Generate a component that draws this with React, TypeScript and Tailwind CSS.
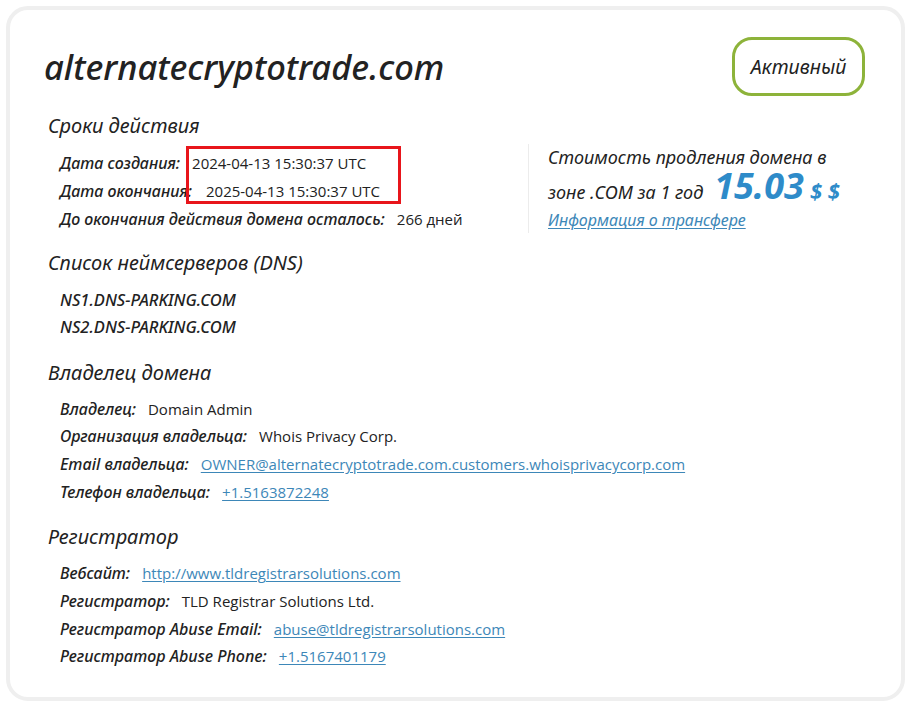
const label = "italic font-medium text-[16px] text-[#222]";
const value = "font-['Open_Sans',sans-serif] text-[15px] text-[#222]";
const link = "font-['Open_Sans',sans-serif] text-[15px] text-[#3d87b8] underline underline-offset-2";
const sans = { fontFamily: "'Noto Sans', sans-serif" };

interface Row {
  label: string;
  value: string;
  link?: boolean;
}

const owner: Row[] = [
  { label: "Владелец:", value: "Domain Admin" },
  { label: "Организация владельца:", value: "Whois Privacy Corp." },
  {
    label: "Email владельца:",
    value: "OWNER@alternatecryptotrade.com.customers.whoisprivacycorp.com",
    link: true,
  },
  { label: "Телефон владельца:", value: "+1.5163872248", link: true },
];

const registrar: Row[] = [
  { label: "Вебсайт:", value: "http://www.tldregistrarsolutions.com", link: true },
  { label: "Регистратор:", value: "TLD Registrar Solutions Ltd." },
  { label: "Регистратор Abuse Email:", value: "abuse@tldregistrarsolutions.com", link: true },
  { label: "Регистратор Abuse Phone:", value: "+1.5167401179", link: true },
];

function Field({ row }: { row: Row }) {
  return (
    <div className="flex h-[27.67px] items-center gap-[12px]">
      <span className={label}>{row.label}</span>
      {row.link ? <a className={link}>{row.value}</a> : <span className={value}>{row.value}</span>}
    </div>
  );
}

function Heading({ children }: { children: React.ReactNode }) {
  return <h2 className="text-[20px] italic leading-[28px] text-[#222]">{children}</h2>;
}

export default function App() {
  return (
    <div className="min-h-[707px] bg-white p-[6px]" style={sans}>
      <div className="rounded-[22px] border-4 border-[#efefef] pb-[27px] pl-[34px] pr-[36px] pt-[27px]">
        <div className="flex items-start justify-between">
          <h1 className="mt-[10px] text-[34.5px] italic font-medium leading-[40px] text-[#222]">
            alternatecryptotrade.com
          </h1>
          <div className="flex h-[59px] w-[133px] items-center justify-center rounded-[20px] border-[3px] border-[#8db33a] text-[19.5px] italic text-[#222]">
            Активный
          </div>
        </div>

        <div className="mt-[16px] pl-[4px]">
          <Heading>Сроки действия</Heading>
          <div className="mt-[9px] flex">
            <div className="relative w-[480px] pl-[12px]">
              <div className="flex h-[28px] items-center gap-[12px]">
                <span className={label}>Дата создания:</span>
                <span className={value}>2024-04-13 15:30:37 UTC</span>
              </div>
              <div className="flex h-[28px] items-center gap-[14px]">
                <span className={label}>Дата окончания:</span>
                <span className={value}>2025-04-13 15:30:37 UTC</span>
              </div>
              <div className="flex h-[28px] items-center gap-[12px]">
                <span className={label}>До окончания действия домена осталось:</span>
                <span className={value}>266 дней</span>
              </div>
              <div className="absolute left-[138px] top-[-3px] h-[58px] w-[215px] border-[3px] border-[#e8151b]" />
            </div>
            <div className="-mt-[5px] border-l border-[#ececec] pl-[19px]">
              <div className="text-[18px] italic leading-[26px] text-[#222]">Стоимость продления домена в</div>
              <div className="flex items-baseline text-[18px] italic leading-[31px] text-[#222]">
                зоне .COM за 1 год
                <span className="ml-[11px] text-[36px] font-bold leading-[31px] text-[#2e8bc9]">15.03</span>
                <span className="ml-[6px] text-[22px] font-bold leading-[31px] text-[#2e8bc9]">$ $</span>
              </div>
              <a className="text-[16px] italic text-[#3d87b8] underline underline-offset-2">Информация о трансфере</a>
            </div>
          </div>

          <div className="mt-[16px]">
            <Heading>Список неймсерверов (DNS)</Heading>
            <div className="mt-[10px] pl-[12px] text-[16.5px] italic font-medium text-[#222]">
              <div className="flex h-[27px] items-center">NS1.DNS-PARKING.COM</div>
              <div className="flex h-[27px] items-center">NS2.DNS-PARKING.COM</div>
            </div>
          </div>

          <div className="mt-[18px]">
            <Heading>Владелец домена</Heading>
            <div className="mt-[8px] pl-[12px]">
              {owner.map((r) => (
                <Field key={r.label} row={r} />
              ))}
            </div>
          </div>

          <div className="mt-[17px]">
            <Heading>Регистратор</Heading>
            <div className="mt-[9px] pl-[12px]">
              {registrar.map((r) => (
                <Field key={r.label} row={r} />
              ))}
            </div>
          </div>
        </div>
      </div>
    </div>
  );
}
